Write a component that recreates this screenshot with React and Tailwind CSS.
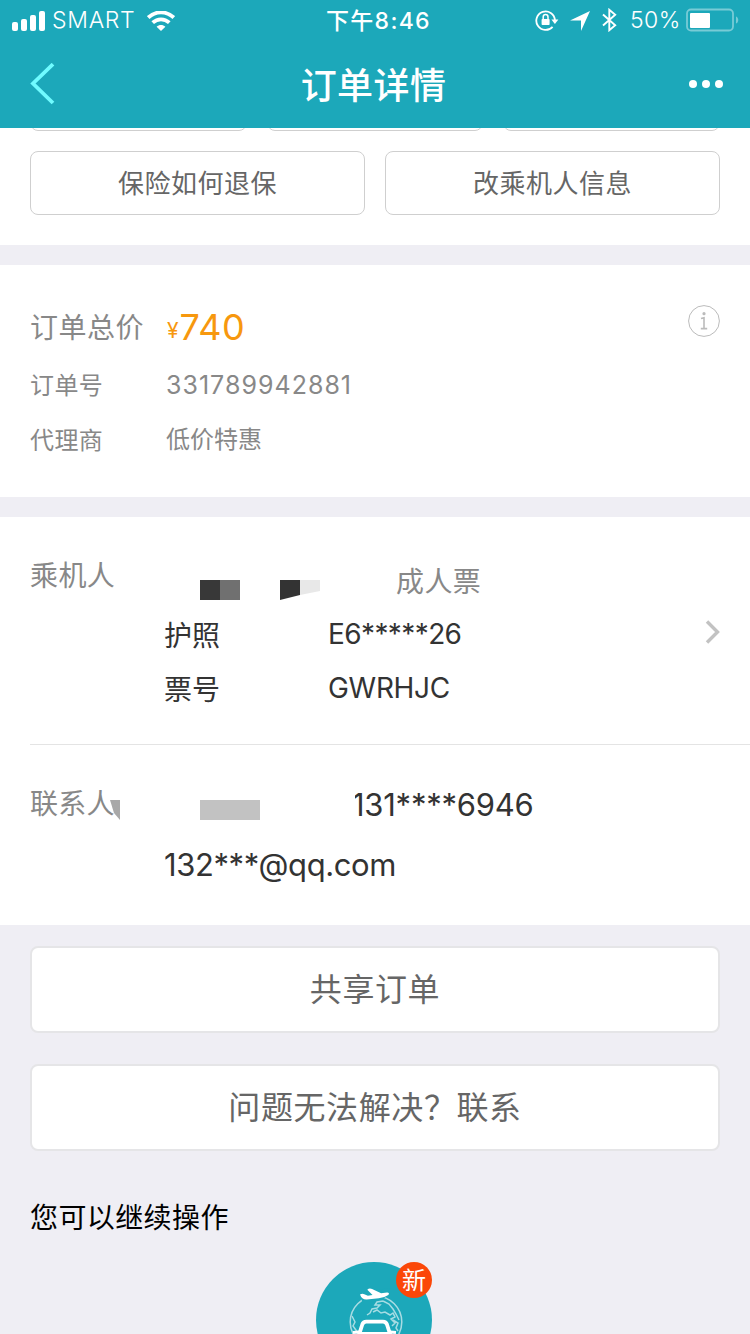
const StatusBar = () => (
  <div className="flex h-10 items-center pt-px pl-3 text-[23px] leading-none">
    <svg className="h-5 w-[34px]" viewBox="0 0 34 20" fill="#fff">
      <rect x="0" y="11" width="6" height="9" rx="2" />
      <rect x="9" y="8" width="6" height="12" rx="2" />
      <rect x="18" y="4" width="6" height="16" rx="2" />
      <rect x="27" y="0" width="6" height="20" rx="2" />
    </svg>
    <span className="ml-1.5 w-[95px] font-light tracking-[0.7px] whitespace-nowrap">SMART</span>
    <svg className="h-5 w-7" viewBox="0 0 28 20" fill="none" stroke="#fff" strokeWidth="3.8">
      <path d="M1.2 6.6C8.5 -0.4 19.5 -0.4 26.8 6.6" />
      <path d="M5.7 11.7c4.9-4.5 11.7-4.5 16.6 0" />
      <path d="M9.6 15.8c2.5-2.3 6.3-2.3 8.8 0L14 20z" fill="#fff" stroke="none" />
    </svg>
    <span className="ml-[151px] w-[209px] pt-0.5 font-medium tracking-[1.3px] whitespace-nowrap">下午8:46</span>
    <svg className="-mt-0.5 h-6 w-6" viewBox="0 0 24 24" fill="none" stroke="#fff" strokeWidth="1.8">
      <path d="M17.6 18.8A9.3 9.3 0 1 1 19.9 12" />
      <path d="M16.4 11.4h7L19.9 16z" fill="#fff" stroke="none" />
      <rect x="6.6" y="11" width="8" height="6" rx="0.8" fill="#fff" stroke="none" />
      <path d="M8.2 11V9a2.4 2.4 0 0 1 4.8 0v2" strokeWidth="1.5" />
    </svg>
    <svg className="ml-[11px] h-5 w-5" viewBox="0 0 20 20" fill="#fff">
      <path d="M20 0L11 20V9.6H0z" />
    </svg>
    <svg className="-mt-0.5 ml-3 h-6 w-[15px]" viewBox="0 0 15 24" fill="none" stroke="#fff" strokeWidth="1.9">
      <path d="M1 6.5L13.2 17.2L7.3 22.2V1.8L13.2 6.8L1 17.5" />
    </svg>
    <span className="ml-[13px] w-[56px] font-light tracking-[0.4px] whitespace-nowrap">50%</span>
    <svg className="-mt-0.5 h-6 w-[54px]" viewBox="0 0 54 24">
      <rect x="1" y="1.5" width="46" height="21" rx="4" fill="none" stroke="#78cbd6" strokeWidth="1.8" />
      <rect x="4" y="5" width="20" height="15" rx="1" fill="#fff" />
      <path d="M50 8.5c3 1 3 6 0 7z" fill="#78cbd6" />
    </svg>
  </div>
);

const Header = () => (
  <header className="h-32 bg-[#1ca8ba] text-white">
    <StatusBar />
    <div className="flex h-[88px] items-center justify-between pr-[27px] pl-[30px]">
      <svg className="h-[42px] w-[34px]" viewBox="0 0 34 42" fill="none" stroke="#70fbff" strokeWidth="3.8">
        <path d="M23 1.2L3 20.5L23 40" />
      </svg>
      <h1 className="mr-1.5 pt-[3px] text-[36px] leading-none font-medium tracking-[0.4px]">订单详情</h1>
      <svg className="h-2 w-[34px]" viewBox="0 0 34 8" fill="#fff">
        <circle cx="4" cy="4" r="4" />
        <circle cx="17" cy="4" r="4" />
        <circle cx="30" cy="4" r="4" />
      </svg>
    </div>
  </header>
);

const SmallButton = ({ children }) => (
  <button className="h-16 flex-1 rounded-lg border border-[#cfcfcf] bg-white pt-0.5 text-[26px] leading-none tracking-[0.5px] text-[#666]">
    {children}
  </button>
);

const BigButton = ({ children }) => (
  <button className="h-[87px] rounded-lg border-2 border-[#e5e5e7] bg-white text-[32px] leading-none tracking-[0.6px] text-[#666]">
    {children}
  </button>
);

const QuickActions = () => (
  <section className="h-[117px] bg-white px-[30px]">
    {/* bottom edge of the row scrolled under the header */}
    <div className="flex h-[3px] items-end gap-5 overflow-hidden">
      {[0, 1, 2].map((i) => (
        <div key={i} className="h-8 flex-1 rounded-lg border border-[#cfcfcf]" />
      ))}
    </div>
    <div className="mt-5 flex gap-5">
      <SmallButton>保险如何退保</SmallButton>
      <SmallButton>改乘机人信息</SmallButton>
    </div>
  </section>
);

const OrderInfo = () => (
  <section className="mt-5 flex h-[232px] justify-between bg-white px-[30px] pt-[33px] text-[24px] leading-none text-[#888]">
    <div>
      <div className="flex h-[58px] items-center">
        <span className="w-[137px] pt-0.5 text-[28px] tracking-[0.5px]">订单总价</span>
        <span className="flex items-end text-[#f7980e]">
          <span className="mb-1 text-[21px]">¥</span>
          <span className="ml-px text-[36px] tracking-[0.5px]">740</span>
        </span>
      </div>
      <div className="flex h-14 items-center">
        <span className="w-[136px] pt-[3px] tracking-[0.4px]">订单号</span>
        <span className="pt-0.5 text-[25px] tracking-[1.02px]">331789942881</span>
      </div>
      <div className="flex h-[55px] items-center">
        <span className="w-[136px] pt-0.5 tracking-[0.4px]">代理商</span>
        <span>低价特惠</span>
      </div>
    </div>
    <svg className="mt-[7px] h-8 w-8" viewBox="0 0 32 32" fill="none" stroke="#bbb">
      <circle cx="16" cy="16" r="15.4" />
      <circle cx="16" cy="8.7" r="1.6" fill="#bbb" stroke="none" />
      <path d="M13 13.5l3-.8V23.5M12.8 23.6h6.4" strokeWidth="1.6" />
    </svg>
  </section>
);

const Passenger = () => (
  <div className="ml-[30px] flex h-[228px] border-b border-[#e4e4e4] pt-9">
    <span className="w-[134px] pt-[9px] text-[28px] leading-none tracking-[0.4px] text-[#888]">乘机人</span>
    <div className="w-[541px]">
      <div className="flex h-[54px] items-center">
        <svg className="mt-5 ml-9 h-5 w-[120px]" viewBox="0 0 120 20">
          <path d="M0 0h20v20H0z" fill="#383838" />
          <path d="M20 0h20v20H20z" fill="#707070" />
          <path d="M80 0h20v15L80 20z" fill="#333" />
          <path d="M100 0h20v11l-20 4z" fill="#e8e8e8" />
        </svg>
        <span className="ml-[76px] pt-[3px] text-[28px] leading-none tracking-[0.4px] text-[#888]">成人票</span>
      </div>
      <div className="flex h-[54px] items-center">
        <span className="w-[164px] pt-[3px]">护照</span>
        <span className="tracking-[-0.6px]">E6*****26</span>
      </div>
      <div className="flex h-[54px] items-center">
        <span className="w-[164px] pt-[3px]">票号</span>
        <span className="tracking-[-0.3px]">GWRHJC</span>
      </div>
    </div>
    <svg className="mt-[67px] h-6 w-4" viewBox="0 0 16 24" fill="none" stroke="#c2c2c2" strokeWidth="3.4">
      <path d="M2 1.5L12.5 12L2 22.5" />
    </svg>
  </div>
);

const Contact = () => (
  <div className="ml-[30px] flex pt-[30px] text-[31px]">
    <div className="flex w-[134px]">
      <span className="w-20 pt-[15px] text-[28px] leading-none tracking-[0.2px] whitespace-nowrap text-[#888]">联系人</span>
      <svg className="mt-[25px] h-5 w-2.5" viewBox="0 0 10 20">
        <path d="M0 0h10v20L4 13z" fill="#a8a8a8" />
      </svg>
    </div>
    <div>
      <div className="flex h-[60px] items-center">
        <div className="mt-2.5 ml-9 h-5 w-[60px] bg-[#c2c2c2]" />
        <div className="relative -mt-px ml-[92px] tracking-[-0.25px]">
          131****6946
          <span className="absolute top-0 left-0 h-full w-[3px] bg-white" />
        </div>
      </div>
      <div className="-mt-px flex h-[60px] items-center tracking-[-0.4px]">132***@qq.com</div>
    </div>
  </div>
);

const RideEntry = () => (
  <div className="relative mt-[27px] ml-[316px] h-[116px] w-[116px] rounded-full bg-[#1ca8ba]">
    <svg className="h-full w-full" viewBox="0 0 116 116" fill="none" stroke="#fff">
      <circle cx="60" cy="60" r="25.8" stroke="#a9dce3" strokeWidth="1.5" />
      <path d="M45 30L75 26L66 40H46z" fill="#1ca8ba" stroke="none" />
      <path
        d="M67 39l-6 1l-2 3h5l-3 3l-5 1l-2 4l-3 2M57 50l4-2l4 3l4-1l5 3l3-2l2 4l-4 2l4 4l-3 3M67 39l6 3l4 5l3 5l3 6M36 54l3 6l-2 4l5 7M77 58l5 3l-2 5l2 3"
        stroke="#a5dce3"
        strokeWidth="1.5"
      />
      <path
        d="M44 32.5q2.5-1.4 4.3-.2l3.6 1.5l4.6-.9l-5.2-5.2q2-1.8 4.8-.6l9 4.1l6-.6q3 .4 1.2 2.3q-4.500 3-9.500 3.300l-12 1.300q-5 .3-6.800-5z"
        fill="#fff"
        stroke="none"
      />
      <path d="M42 76l4.300-13.500q1-2.800 4-2.800H67q3 0 4 2.800L75.300 76z" fill="#1ca8ba" strokeWidth="3.8" />
      <path d="M37 70.500l6-.5M80 70.500l-6-.5M43 71.500h32" strokeWidth="3" />
    </svg>
    <span className="absolute top-0 right-0 flex size-9 items-center justify-center rounded-full bg-[#fb4708] pt-0.5 text-[24px] leading-none text-white">
      新
    </span>
  </div>
);

const App = () => {
  return (
    <div className="h-[1334px] w-[750px] overflow-hidden bg-[#efeef4] font-['Inter','Noto_Sans_CJK_SC',sans-serif]">
      <Header />
      <QuickActions />
      <OrderInfo />
      <section className="mt-5 h-[408px] bg-white text-[28px] leading-none text-[#333]">
        <Passenger />
        <Contact />
      </section>
      <div className="flex flex-col gap-[31px] px-[30px] pt-[21px]">
        <BigButton>共享订单</BigButton>
        <BigButton>问题无法解决？联系</BigButton>
      </div>
      <h2 className="mt-[50px] ml-[30px] text-[28px] leading-[34px] tracking-[0.4px] text-black">您可以继续操作</h2>
      <RideEntry />
    </div>
  );
};

export default App;
